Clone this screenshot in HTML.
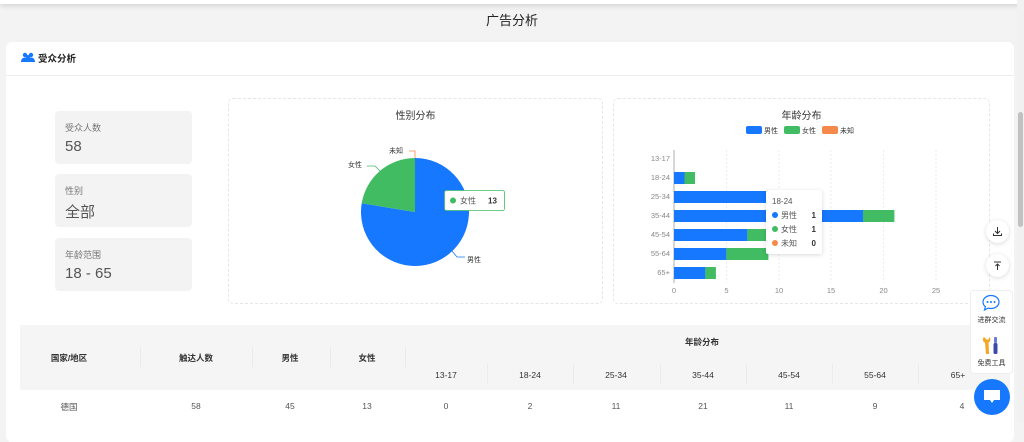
<!DOCTYPE html>
<html><head><meta charset="utf-8"><style>
*{margin:0;padding:0;box-sizing:border-box}
body{width:1024px;height:423px;overflow:hidden;background:#f3f3f3;font-family:"Liberation Sans","Noto Sans CJK SC",sans-serif;position:relative;color:#333}
.abs{position:absolute}
.topbar{left:0;top:0;width:1024px;height:4px;background:#fff;box-shadow:0 1px 6px rgba(0,0,0,.2)}
.title{left:0;width:1024px;top:10px;text-align:center;font-size:13px;color:#222}
.card{left:6px;top:42px;width:1008px;height:400px;background:#fff;border-radius:6px}
.hdr{left:6px;top:75px;width:1008px;height:1px;background:#eee}
.stat{left:55px;width:137px;height:53px;background:#f3f3f3;border-radius:4px}
.stat .l{position:absolute;left:10px;top:10px;font-size:9px;color:#777}
.stat .v{position:absolute;left:10px;top:27px;font-size:15px;color:#555}
.box{border:1px dashed #e6e6e6;border-radius:5px}
.ct{font-size:10px;color:#333;text-align:center}
.th{font-size:8.5px;font-weight:bold;color:#333;text-align:center;position:absolute}
.td{font-size:8.5px;color:#555;text-align:center;position:absolute}
.sep{position:absolute;width:1px;height:20px;background:#ebebeb}
.fab{width:23px;height:23px;border-radius:50%;background:#fff;box-shadow:0 1px 5px rgba(0,0,0,.15)}
</style></head><body>
<div class="abs topbar"></div>
<div class="abs title">广告分析</div>
<div class="abs card"></div>
<div class="abs hdr"></div>
<svg class="abs" style="left:21px;top:52px" width="14" height="11" viewBox="0 0 14 11"><circle cx="4" cy="3" r="2.2" fill="#1677ff"/><circle cx="10" cy="3" r="2.2" fill="#1677ff"/><circle cx="7" cy="5" r="2" fill="#1677ff"/><path d="M0 10c0-3 2-4.5 4-4.5s4 1.5 4 4.5zM6 10c0-3 2-4.5 4-4.5s4 1.5 4 4.5z" fill="#1677ff"/></svg>
<div class="abs" style="left:38px;top:51px;font-size:9.5px;font-weight:bold;color:#222">受众分析</div>

<div class="abs stat" style="top:111px"><div class="l">受众人数</div><div class="v">58</div></div>
<div class="abs stat" style="top:174px"><div class="l">性别</div><div class="v">全部</div></div>
<div class="abs stat" style="top:238px"><div class="l">年龄范围</div><div class="v">18 - 65</div></div>

<div class="abs box" style="left:228px;top:98px;width:375px;height:206px"></div>
<div class="abs ct" style="left:228px;width:375px;top:107px">性别分布</div>
<svg class="abs" style="left:228px;top:98px" width="375" height="206">
<g transform="translate(-228,-98)">
<path d="M415 212 L415 158 A54 54 0 1 1 361.7 203.3 Z" fill="#1677ff"/>
<path d="M415 212 L361.7 203.3 A54 54 0 0 1 415 158 Z" fill="#42bc62"/>
<polyline points="415,158 415,151 409,151" fill="none" stroke="#f5894b" stroke-width="0.8"/>
<polyline points="380,171 375,166 367,166" fill="none" stroke="#42bc62" stroke-width="0.8"/>
<polyline points="452,251 457,257 465,257" fill="none" stroke="#1677ff" stroke-width="0.8"/>
<text x="389" y="153" font-size="7" fill="#333">未知</text>
<text x="348" y="167" font-size="7" fill="#333">女性</text>
<text x="467" y="262" font-size="7" fill="#333">男性</text>
<rect x="444.5" y="190.5" width="60" height="20" rx="2" fill="#fff" stroke="#42bc62" stroke-width="0.8"/>
<circle cx="453" cy="200.5" r="3" fill="#42bc62"/>
<text x="460" y="203.5" font-size="8" fill="#555">女性</text>
<text x="488" y="203.5" font-size="8" font-weight="bold" fill="#333">13</text>
</g></svg>

<div class="abs box" style="left:613px;top:98px;width:377px;height:206px"></div>
<div class="abs ct" style="left:613px;width:377px;top:107px">年龄分布</div>
<svg class="abs" style="left:613px;top:98px" width="377" height="206">
<g transform="translate(-613,-98)" font-family="Liberation Sans,Noto Sans CJK SC,sans-serif">
<rect x="746" y="126" width="16" height="8" rx="2" fill="#1677ff"/><text x="764" y="133" font-size="7" fill="#333">男性</text>
<rect x="784" y="126" width="16" height="8" rx="2" fill="#42bc62"/><text x="802" y="133" font-size="7" fill="#333">女性</text>
<rect x="822" y="126" width="16" height="8" rx="2" fill="#f5894b"/><text x="840" y="133" font-size="7" fill="#333">未知</text>
<g stroke="#e3e6ee" stroke-width="0.7" stroke-dasharray="2,2">
<line x1="726.5" y1="150" x2="726.5" y2="283"/><line x1="779" y1="150" x2="779" y2="283"/><line x1="831" y1="150" x2="831" y2="283"/><line x1="883.5" y1="150" x2="883.5" y2="283"/><line x1="936" y1="150" x2="936" y2="283"/>
</g>
<line x1="674" y1="150" x2="674" y2="283" stroke="#999" stroke-width="0.8"/>
<g fill="#1677ff">
<rect x="674" y="172" width="10.5" height="12"/><rect x="674" y="191" width="100" height="12"/><rect x="674" y="210" width="189" height="12"/><rect x="674" y="229" width="73.4" height="12"/><rect x="674" y="248" width="52.4" height="12"/><rect x="674" y="267" width="31.4" height="12"/>
</g>
<g fill="#42bc62">
<rect x="684.5" y="172" width="10.5" height="12"/><rect x="863" y="210" width="31.4" height="12"/><rect x="747.4" y="229" width="30" height="12"/><rect x="726.4" y="248" width="42" height="12"/><rect x="705.4" y="267" width="10.5" height="12"/>
</g>
<g font-size="7.5" fill="#888" text-anchor="end">
<text x="670" y="161">13-17</text><text x="670" y="180">18-24</text><text x="670" y="199">25-34</text><text x="670" y="218">35-44</text><text x="670" y="237">45-54</text><text x="670" y="256">55-64</text><text x="670" y="275">65+</text>
</g>
<g font-size="7.5" fill="#888" text-anchor="middle">
<text x="674" y="293">0</text><text x="726.5" y="293">5</text><text x="779" y="293">10</text><text x="831" y="293">15</text><text x="883.5" y="293">20</text><text x="936" y="293">25</text>
</g>
<rect x="766" y="190" width="56" height="64" rx="2" fill="#fff" style="filter:drop-shadow(0 1px 2px rgba(0,0,0,.15))"/>
<text x="772" y="204" font-size="8" fill="#555">18-24</text>
<circle cx="775" cy="215" r="3" fill="#1677ff"/><text x="781" y="218" font-size="8" fill="#555">男性</text><text x="816" y="218" font-size="8" font-weight="bold" fill="#333" text-anchor="end">1</text>
<circle cx="775" cy="229" r="3" fill="#42bc62"/><text x="781" y="232" font-size="8" fill="#555">女性</text><text x="816" y="232" font-size="8" font-weight="bold" fill="#333" text-anchor="end">1</text>
<circle cx="775" cy="243" r="3" fill="#f5894b"/><text x="781" y="246" font-size="8" fill="#555">未知</text><text x="816" y="246" font-size="8" font-weight="bold" fill="#333" text-anchor="end">0</text>
</g></svg>

<div class="abs" style="left:20px;top:325px;width:990px;height:65px;background:#f5f5f5"></div>
<div class="th" style="left:29px;width:80px;top:352px">国家/地区</div>
<div class="th" style="left:156px;width:80px;top:352px">触达人数</div>
<div class="th" style="left:250px;width:80px;top:352px">男性</div>
<div class="th" style="left:327px;width:80px;top:352px">女性</div>
<div class="th" style="left:662px;width:80px;top:336px">年龄分布</div>
<div class="sep" style="left:140px;top:347px"></div><div class="sep" style="left:252px;top:347px"></div><div class="sep" style="left:330px;top:347px"></div><div class="sep" style="left:405px;top:347px"></div>
<div class="sep" style="left:487px;top:364px"></div><div class="sep" style="left:573px;top:364px"></div><div class="sep" style="left:660px;top:364px"></div><div class="sep" style="left:746px;top:364px"></div><div class="sep" style="left:832px;top:364px"></div><div class="sep" style="left:918px;top:364px"></div>
<div class="th" style="left:406px;width:80px;top:370px;font-weight:normal;color:#333">13-17</div>
<div class="th" style="left:490px;width:80px;top:370px;font-weight:normal;color:#333">18-24</div>
<div class="th" style="left:576px;width:80px;top:370px;font-weight:normal;color:#333">25-34</div>
<div class="th" style="left:663px;width:80px;top:370px;font-weight:normal;color:#333">35-44</div>
<div class="th" style="left:749px;width:80px;top:370px;font-weight:normal;color:#333">45-54</div>
<div class="th" style="left:835px;width:80px;top:370px;font-weight:normal;color:#333">55-64</div>
<div class="th" style="left:918px;width:80px;top:370px;font-weight:normal;color:#333">65+</div>
<div class="td" style="left:29px;width:80px;top:401px">德国</div>
<div class="td" style="left:156px;width:80px;top:401px">58</div>
<div class="td" style="left:250px;width:80px;top:401px">45</div>
<div class="td" style="left:327px;width:80px;top:401px">13</div>
<div class="td" style="left:406px;width:80px;top:401px">0</div>
<div class="td" style="left:490px;width:80px;top:401px">2</div>
<div class="td" style="left:576px;width:80px;top:401px">11</div>
<div class="td" style="left:663px;width:80px;top:401px">21</div>
<div class="td" style="left:749px;width:80px;top:401px">11</div>
<div class="td" style="left:835px;width:80px;top:401px">9</div>
<div class="td" style="left:922px;width:80px;top:401px">4</div>

<div class="abs" style="left:1017px;top:0;width:7px;height:423px;background:#f1f1f1"></div>
<div class="abs" style="left:1018px;top:112px;width:5px;height:115px;background:#c1c1c1;border-radius:3px"></div>

<div class="abs fab" style="left:986px;top:220px"></div>
<svg class="abs" style="left:992px;top:226px" width="11" height="11" viewBox="0 0 11 11"><path d="M5.5 1v6M3 5l2.5 2.5L8 5M1.5 7.5v2h8v-2" fill="none" stroke="#333" stroke-width="1"/></svg>
<div class="abs fab" style="left:986px;top:254px"></div>
<svg class="abs" style="left:992px;top:260px" width="11" height="11" viewBox="0 0 11 11"><path d="M2 2h7M5.5 4v6M3.5 6l2-2 2 2" fill="none" stroke="#333" stroke-width="1"/></svg>
<div class="abs" style="left:970px;top:290px;width:43px;height:84px;background:#fff;border:1px solid #eee;border-radius:4px"></div>
<svg class="abs" style="left:981px;top:294px" width="20" height="18" viewBox="0 0 20 18"><path d="M10 1.5c4.4 0 8 2.9 8 6.5s-3.6 6.5-8 6.5c-1 0-2-.1-2.8-.4L3.5 16l.9-3.3C2.9 11.5 2 9.8 2 8c0-3.6 3.6-6.5 8-6.5z" fill="none" stroke="#1677ff" stroke-width="1.2"/><circle cx="6.5" cy="8" r="1" fill="#1677ff"/><circle cx="10" cy="8" r="1" fill="#1677ff"/><circle cx="13.5" cy="8" r="1" fill="#1677ff"/></svg>
<div class="abs" style="left:970px;top:315px;width:43px;text-align:center;font-size:7px;color:#333">进群交流</div>
<svg class="abs" style="left:982px;top:336px" width="18" height="20" viewBox="0 0 18 20"><path d="M2 1c-2 2-1 5 1 5.5L4 18h3L6.5 6.5C8.5 5.5 9 3 7.5 1L6.5 3.5h-2z" fill="#f5a623"/><rect x="12" y="1" width="3" height="6" rx="1" fill="#6b7bd6"/><rect x="11.5" y="7" width="4" height="11" rx="1.5" fill="#3b4aa8"/></svg>
<div class="abs" style="left:970px;top:358px;width:43px;text-align:center;font-size:7px;color:#333">免费工具</div>
<div class="abs" style="left:974px;top:379px;width:36px;height:36px;border-radius:50%;background:#1677ff"></div>
<svg class="abs" style="left:982px;top:388px" width="20" height="18" viewBox="0 0 20 18"><path d="M2 2h16v10H12l-2 3-2-3H2z" fill="#fff"/></svg>
</body></html>
